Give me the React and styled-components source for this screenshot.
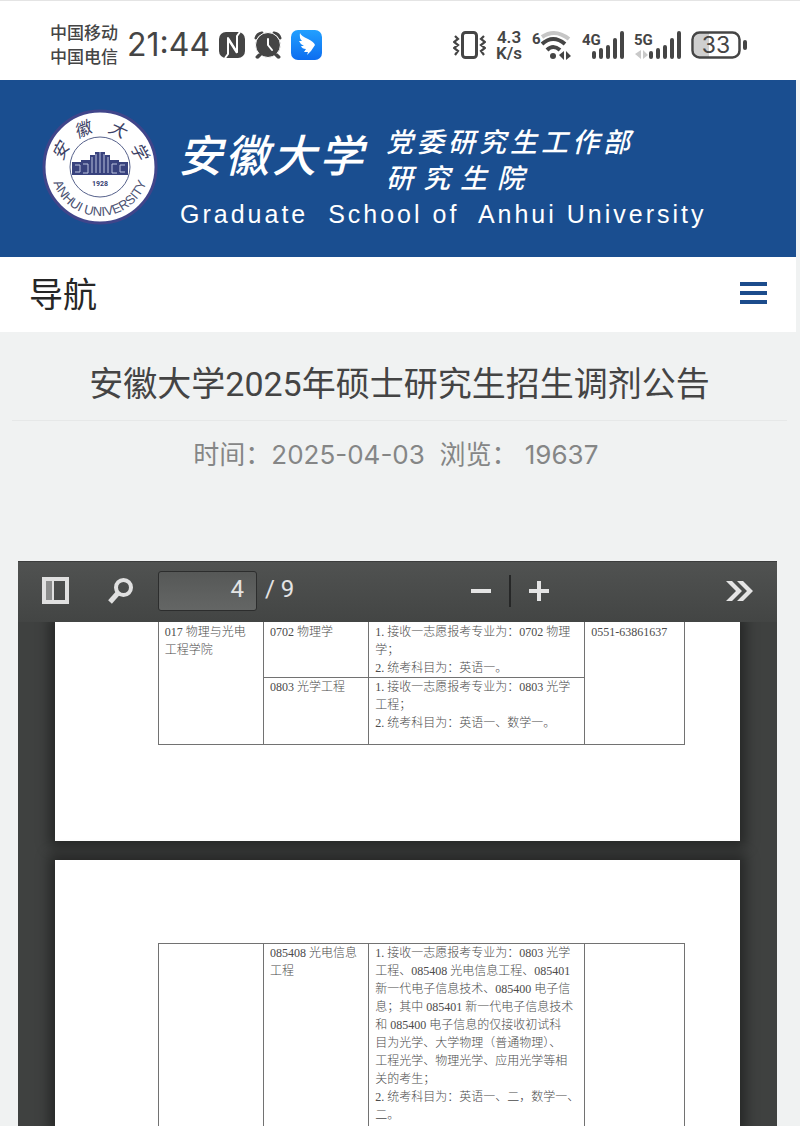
import React from 'react'
import styled, { createGlobalStyle } from 'styled-components'

const GlobalStyle = createGlobalStyle`
  * {
    box-sizing: border-box;
  }
  body {
    margin: 0;
    background: #f0f2f2;
    font-family: Roboto, "Noto Sans CJK SC", sans-serif;
  }
  button, input {
    font: inherit;
    color: inherit;
  }
`;

const StyledScreen = styled.div`
  display: flex;
  flex-direction: column;
  min-height: 100vh;
`;

const StyledStatusBar = styled.div`
  display: flex;
  align-items: center;
  justify-content: space-between;
  height: 80px;
  padding: 8px 52px 0 50px;
  border-top: 1px solid #e4e4e4;
  background: #fff;
  color: #454545;
`;

const StyledStatusGroup = styled.div`
  display: flex;
  align-items: center;
  gap: ${({ $gap }) => $gap}px;
`;

const StyledCarriers = styled.div`
  font-size: 17px;
  font-weight: 500;
  line-height: 24px;
`;

const StyledTime = styled.div`
  font-family: Inter, sans-serif;
  font-size: 32px;
  line-height: 40px;
`;

const StyledSpeed = styled.div`
  font-size: 17px;
  font-weight: 600;
  line-height: 16px;
  text-align: center;
`;

const StyledIcon = styled.svg`
  display: block;
  flex: none;
`;

const StyledSite = styled.div`
  display: flex;
  flex: 1;
  flex-direction: column;
  padding-right: 4px;
`;

const StyledHeader = styled.header`
  display: flex;
  align-items: center;
  gap: 20px;
  height: 177px;
  padding: 0 42px 4px;
  background: #1a4e90;
  color: #fff;
`;

const StyledBrand = styled.div`
  display: flex;
  flex-direction: column;
  gap: 2px;
  padding-top: 20px;
  white-space: nowrap;
`;

const StyledBrandRow = styled.div`
  display: flex;
  align-items: flex-start;
  gap: 20px;
  font-style: italic;
  font-weight: 500;
`;

const StyledSchoolName = styled.div`
  font-size: 44px;
  line-height: 64px;
  letter-spacing: 3px;
`;

const StyledDepartment = styled.div`
  font-size: 27px;
  line-height: 36px;
  letter-spacing: ${({ $wide }) => ($wide ? 10 : 4)}px;
`;

const StyledEnglishName = styled.div`
  padding-left: 2px;
  font-family: "Liberation Sans", Arial, sans-serif;
  font-size: 25px;
  line-height: 30px;
  letter-spacing: 3px;
  white-space: pre;
`;

const StyledNav = styled.nav`
  display: flex;
  align-items: center;
  justify-content: space-between;
  height: 75px;
  padding: 0 29px 4px;
  background: #fff;
  color: #262626;
  font-size: 34px;
`;

const StyledMenuButton = styled.button`
  display: flex;
  flex-direction: column;
  gap: 5px;
  width: 27px;
  padding: 0;
  border: 0;
  background: none;
`;

const StyledMenuBar = styled.span`
  height: 4px;
  background: #1c4c8c;
`;

const StyledArticleHead = styled.div`
  margin: 0 9px 0 12px;
  text-align: center;
`;

const StyledTitle = styled.h1`
  margin: 0;
  padding: 27px 0 11px;
  border-bottom: 1px solid #e6e8e8;
  color: #444;
  font-size: 34px;
  font-weight: 400;
  line-height: 50px;
`;

const StyledMeta = styled.p`
  margin: 0;
  padding: 15px 0 87px;
  color: #858686;
  font-family: Inter, "Noto Sans CJK SC", sans-serif;
  font-size: 26px;
  line-height: 38px;
  white-space: pre;
`;

const StyledViewer = styled.section`
  display: flex;
  flex: 1;
  flex-direction: column;
  margin: 0 19px 0 18px;
  background: #3f4140;
`;

const StyledToolbar = styled.div`
  display: flex;
  align-items: center;
  justify-content: space-between;
  height: 61px;
  padding: 0 24px 3px;
  border-top: 1px solid #3c3d3d;
  background: linear-gradient(#505251, #434544);
  color: #e4e4e4;
`;

const StyledToolGroup = styled.div`
  display: flex;
  align-items: center;
  gap: ${({ $gap }) => $gap}px;
`;

const StyledToolButton = styled.button`
  display: block;
  padding: 0;
  border: 0;
  background: none;
`;

const StyledPager = styled.label`
  display: flex;
  align-items: center;
  gap: 8px;
  font-size: 24px;
  line-height: 38px;
`;

const StyledPageInput = styled.input`
  width: 99px;
  height: 40px;
  padding: 0 12px 4px;
  border: 1px solid #2c2d2d;
  border-radius: 3px;
  background: linear-gradient(#565857, #646665);
  text-align: right;
`;

const StyledPageCount = styled.span`
  padding-bottom: 4px;
`;

const StyledSeparator = styled.span`
  width: 2px;
  height: 32px;
  background: #262727;
`;

const StyledPages = styled.div`
  display: flex;
  flex: 1;
  flex-direction: column;
  gap: 19px;
  padding: 0 37px;
  overflow: hidden;
`;

const StyledPage = styled.div`
  display: flex;
  flex-direction: column;
  flex: ${({ $fill }) => ($fill ? 1 : 'none')};
  padding: ${({ $fill }) => ($fill ? '83px 8% 0 15%' : '0 8% 96px 15%')};
  background: #fff;
  box-shadow: 0 0 12px 6px rgba(0, 0, 0, 0.4);
`;

const StyledTable = styled.table`
  flex: 1;
  width: 100%;
  border-collapse: collapse;
  table-layout: fixed;
  color: #4b4b4b;
  font-family: "Liberation Serif", "Noto Sans CJK SC", serif;
  font-size: 12px;
  font-weight: 300;
  line-height: 18px;
`;

const StyledCell = styled.td`
  height: ${({ $height }) => ($height ? `${$height}px` : 'auto')};
  padding: 0 0 0 6px;
  border: 1px solid #727272;
  border-top-color: ${({ $openTop }) => ($openTop ? 'transparent' : '#727272')};
  border-bottom-color: ${({ $openBottom }) => ($openBottom ? 'transparent' : '#727272')};
  vertical-align: top;
  white-space: nowrap;
`;

function Seal() {
    return (
        <StyledIcon width="116" height="116" viewBox="0 0 116 116" role="img" aria-label="安徽大学">
            <defs>
                <path id="sealBottom" d="M9 58 A49 49 0 0 0 107 58" />
            </defs>
            <circle cx="58" cy="58" r="56" fill="#fff" stroke="#40458a" strokeWidth="3" />
            <circle cx="58" cy="58" r="30" fill="none" stroke="#56618b" strokeWidth="1" />
            <g fill="#38427d" transform="translate(0 -2)">
                <path d="M30 55h9v-2h9v-5h5v-3h10v3h5v5h9v2h9v13H30z" />
                <path
                    d="M33 58h5v7h-5M41 57h5v9h-5M50 50v16M54 47v19M58 45v21M62 47v19M66 50v16M75 57h-5v9h5M83 58h-5v7h5"
                    fill="none" stroke="#b9c0dd" strokeWidth="1"
                />
            </g>
            <text x="58" y="77" textAnchor="middle" fill="#333b70" fontSize="7" fontWeight="700">1928</text>
            <g fill="#3c4165" fontSize="17" fontStyle="italic" textAnchor="middle">
                <text transform="translate(24 45) rotate(-62)">安</text>
                <text transform="translate(43 26) rotate(-24)">徽</text>
                <text transform="translate(73 26) rotate(24)">大</text>
                <text transform="translate(92 45) rotate(62)">学</text>
            </g>
            <text fill="#4c5272" fontFamily="Liberation Sans" fontSize="13" textAnchor="middle">
                <textPath href="#sealBottom" startOffset="50%">ANHUI UNIVERSITY</textPath>
            </text>
        </StyledIcon>
    )
}

function NfcIcon() {
    return (
        <StyledIcon width="26" height="26" viewBox="0 0 26 26" fill="none">
            <rect x="0" y="0" width="26" height="26" rx="7" fill="#454545" />
            <path d="M6 26l3-4V6l9 14V4l3-4" stroke="#fff" strokeWidth="2" strokeLinejoin="round" />
            <path d="M9 7l9 14" stroke="#fff" strokeWidth="2" />
        </StyledIcon>
    )
}

function AlarmIcon() {
    return (
        <StyledIcon width="28" height="28" viewBox="0 0 28 28" fill="none" strokeLinecap="round">
            <path d="M2 7q1-4 6-5M26 7q-1-4-6-5M6 23l-3 3M22 23l3 3" stroke="#454545" strokeWidth="3" />
            <circle cx="14" cy="14" r="12.500" fill="#454545" stroke="#fff" strokeWidth="1" />
            <path d="M7 23l-3 3M21 23l3 3" stroke="#454545" strokeWidth="3" />
            <path d="M14 8v6l4 5" stroke="#fff" strokeWidth="2" />
        </StyledIcon>
    )
}

function WingIcon() {
    return (
        <StyledIcon width="31" height="30" viewBox="0 0 31 30">
            <defs>
                <linearGradient id="wingBg" x1="0" y1="0" x2="0" y2="1">
                    <stop offset="0" stopColor="#22a0ff" />
                    <stop offset="1" stopColor="#0d6df0" />
                </linearGradient>
            </defs>
            <rect width="31" height="30" rx="7" fill="url(#wingBg)" />
            <path d="M9 3q1 3 8 6 6 3 7 6l-4 6-4 4 1-3h-4l2-3q-4 0-5-3h3q-4-2-5-5h3q-3-3-2-8z" fill="#fff" />
        </StyledIcon>
    )
}

function VibrateIcon() {
    return (
        <StyledIcon width="33" height="28" viewBox="0 0 33 28" fill="none" stroke="#454545">
            <rect x="9.500" y="1.500" width="14" height="25" rx="3" strokeWidth="3" />
            <path d="M2 5l3 3-4 3 4 3-4 3 4 3-3 4M31 5l-3 3 4 3-4 3 4 3-4 3 3 4" strokeWidth="2.200" />
        </StyledIcon>
    )
}

function WifiIcon() {
    return (
        <StyledIcon width="40" height="32" viewBox="0 0 40 32" fill="none">
            <text x="0" y="15" fill="#454545" fontSize="15" fontWeight="700">6</text>
            <path d="M10 8q13-9 27 2" stroke="#c6c6c6" strokeWidth="4" />
            <path d="M10 15q11-10 23 0M15 21q6-6 13 0" stroke="#454545" strokeWidth="4" />
            <circle cx="21" cy="27" r="3" fill="#454545" />
            <path d="M32 22v9l-5-5zM34 31v-9l5 5z" fill="#454545" />
        </StyledIcon>
    )
}

function SignalIcon({ label, arrows }) {
    return (
        <StyledIcon width={arrows ? 47 : 42} height="30" viewBox={arrows ? '-5 0 47 30' : '0 0 42 30'}>
            <text x={arrows ? -5 : 0} y="15" fill="#454545" fontSize="15" fontWeight="700">{label}</text>
            {arrows && <path d="M2 20v9l-6-5zM4 29v-9l5 5z" fill="#c9c9c9" />}
            <path
                d="M12 27v-4M19 27v-7M26 27v-10M33 27V10M40 27V3"
                stroke="#454545" strokeWidth="4" strokeLinecap="round"
            />
        </StyledIcon>
    )
}

function BatteryIcon() {
    return (
        <StyledIcon width="57" height="30" viewBox="0 0 57 30">
            <path d="M9 3h9v24H9q-6 0-6-6V9q0-6 6-6z" fill="#cfcfcf" />
            <rect x="1.500" y="2.500" width="47" height="25" rx="7" fill="none" stroke="#454545" strokeWidth="2.500" />
            <rect x="52" y="10" width="4" height="10" rx="2" fill="#454545" />
            <text x="25" y="23" textAnchor="middle" fill="#454545" fontFamily="Inter" fontSize="23">33</text>
        </StyledIcon>
    )
}

function StatusBar() {
    return (
        <StyledStatusBar>
            <StyledStatusGroup $gap={9}>
                <StyledCarriers>
                    <div>中国移动</div>
                    <div>中国电信</div>
                </StyledCarriers>
                <StyledTime>21:44</StyledTime>
                <NfcIcon />
                <AlarmIcon />
                <WingIcon />
            </StyledStatusGroup>
            <StyledStatusGroup $gap={10}>
                <VibrateIcon />
                <StyledSpeed>
                    <div>4.3</div>
                    <div>K/s</div>
                </StyledSpeed>
                <WifiIcon />
                <SignalIcon label="4G" />
                <SignalIcon label="5G" arrows />
                <BatteryIcon />
            </StyledStatusGroup>
        </StyledStatusBar>
    )
}

function Toolbar() {
    return (
        <StyledToolbar>
            <StyledToolGroup $gap={25}>
                <StyledToolGroup $gap={39}>
                    <StyledToolButton type="button" aria-label="侧栏">
                        <StyledIcon width="27" height="27" viewBox="0 0 27 27">
                            <rect x="2" y="2" width="23" height="23" fill="none" stroke="#e0e0e0" strokeWidth="4" />
                            <rect x="4" y="4" width="6" height="19" fill="#8c8d8d" />
                            <path d="M11 3v21" stroke="#e0e0e0" strokeWidth="2" />
                        </StyledIcon>
                    </StyledToolButton>
                    <StyledToolButton type="button" aria-label="查找">
                        <StyledIcon width="25" height="26" viewBox="0 0 25 26" fill="none" stroke="#e0e0e0">
                            <circle cx="15.500" cy="9.500" r="7.500" strokeWidth="4" />
                            <path d="M10 15l-8 9" strokeWidth="5" />
                        </StyledIcon>
                    </StyledToolButton>
                </StyledToolGroup>
                <StyledPager>
                    <StyledPageInput type="text" defaultValue="4" aria-label="页码" />
                    <StyledPageCount>/ 9</StyledPageCount>
                </StyledPager>
            </StyledToolGroup>
            <StyledToolGroup $gap={18}>
                <StyledToolButton type="button" aria-label="缩小">
                    <StyledIcon width="20" height="20" viewBox="0 0 20 20">
                        <path d="M0 10h20" stroke="#e4e4e4" strokeWidth="4" />
                    </StyledIcon>
                </StyledToolButton>
                <StyledSeparator />
                <StyledToolButton type="button" aria-label="放大">
                    <StyledIcon width="20" height="20" viewBox="0 0 20 20">
                        <path d="M0 10h20M10 0v20" stroke="#e4e4e4" strokeWidth="4" />
                    </StyledIcon>
                </StyledToolButton>
            </StyledToolGroup>
            <StyledToolButton type="button" aria-label="更多">
                <StyledIcon width="27" height="20" viewBox="0 0 27 20" fill="#e4e4e4">
                    <path d="M0 0h6l10 10-10 10H0l10-10zM11 0h6l10 10-10 10h-6l10-10z" />
                </StyledIcon>
            </StyledToolButton>
        </StyledToolbar>
    )
}

function Lines({ items }) {
    return items.map((item) => <div key={item}>{item}</div>)
}

const StyledCol = styled.col`
  width: ${({ $share }) => $share}%;
`;

function Columns() {
    return (
        <colgroup>
            <StyledCol $share={20} />
            <StyledCol $share={20} />
            <StyledCol $share={41} />
            <StyledCol $share={19} />
        </colgroup>
    )
}

const physics = ['1. 接收一志愿报考专业为：0702 物理', '学；', '2. 统考科目为：英语一。']
const optics = ['1. 接收一志愿报考专业为：0803 光学', '工程；', '2. 统考科目为：英语一、数学一。']
const optoelectronic = [
    '1. 接收一志愿报考专业为：0803 光学',
    '工程、085408 光电信息工程、085401',
    '新一代电子信息技术、085400 电子信',
    '息；其中 085401 新一代电子信息技术',
    '和 085400 电子信息的仅接收初试科',
    '目为光学、大学物理（普通物理）、',
    '工程光学、物理光学、应用光学等相',
    '关的考生；',
    '2. 统考科目为：英语一、二，数学一、',
    '二。',
]

function App() {
    return (
        <StyledScreen>
            <GlobalStyle />
            <StatusBar />
            <StyledSite>
                <StyledHeader>
                    <Seal />
                    <StyledBrand>
                        <StyledBrandRow>
                            <StyledSchoolName>安徽大学</StyledSchoolName>
                            <div>
                                <StyledDepartment>党委研究生工作部</StyledDepartment>
                                <StyledDepartment $wide>研究生院</StyledDepartment>
                            </div>
                        </StyledBrandRow>
                        <StyledEnglishName>{'Graduate  School of  Anhui University'}</StyledEnglishName>
                    </StyledBrand>
                </StyledHeader>
                <StyledNav>
                    <span>导航</span>
                    <StyledMenuButton type="button" aria-label="导航">
                        <StyledMenuBar />
                        <StyledMenuBar />
                        <StyledMenuBar />
                    </StyledMenuButton>
                </StyledNav>
                <StyledArticleHead>
                    <StyledTitle>安徽大学2025年硕士研究生招生调剂公告</StyledTitle>
                    <StyledMeta>{'时间：2025-04-03  浏览： 19637 '}</StyledMeta>
                </StyledArticleHead>
                <StyledViewer>
                    <Toolbar />
                    <StyledPages>
                        <StyledPage>
                            <StyledTable>
                                <Columns />
                                <tbody>
                                    <tr>
                                        <StyledCell rowSpan={2} $openTop>
                                            <Lines items={['017  物理与光电', '工程学院']} />
                                        </StyledCell>
                                        <StyledCell $openTop>0702 物理学</StyledCell>
                                        <StyledCell $openTop><Lines items={physics} /></StyledCell>
                                        <StyledCell rowSpan={2} $openTop>0551-63861637</StyledCell>
                                    </tr>
                                    <tr>
                                        <StyledCell $height={67}>0803 光学工程</StyledCell>
                                        <StyledCell><Lines items={optics} /></StyledCell>
                                    </tr>
                                </tbody>
                            </StyledTable>
                        </StyledPage>
                        <StyledPage $fill>
                            <StyledTable>
                                <Columns />
                                <tbody>
                                    <tr>
                                        <StyledCell $openBottom />
                                        <StyledCell $openBottom>
                                            <Lines items={['085408 光电信息', '工程']} />
                                        </StyledCell>
                                        <StyledCell $openBottom><Lines items={optoelectronic} /></StyledCell>
                                        <StyledCell $openBottom />
                                    </tr>
                                </tbody>
                            </StyledTable>
                        </StyledPage>
                    </StyledPages>
                </StyledViewer>
            </StyledSite>
        </StyledScreen>
    )
}

export default App
